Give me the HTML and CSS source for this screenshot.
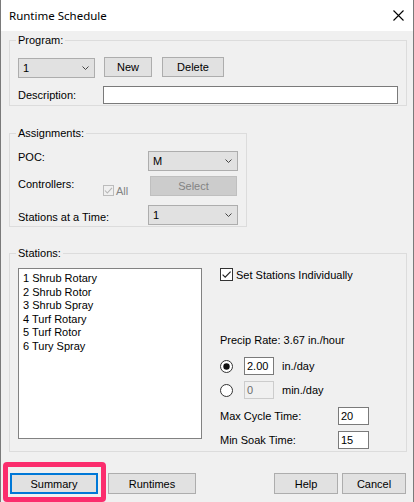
FILE: index.html
```html
<!DOCTYPE html>
<html>
<head>
<meta charset="utf-8">
<link rel="stylesheet" href="styles.css">
</head>
<body>
<div class="window">
  <div class="titlebar">
    <span class="title">Runtime Schedule</span>
    <svg class="close" width="11" height="11" viewBox="0 0 11 11"><path d="M0.5 0.5 L10.5 10.5 M10.5 0.5 L0.5 10.5" stroke="#000" stroke-width="1.1" fill="none"/></svg>
  </div>
  <div class="content">
    <fieldset class="group program">
      <legend>Program:</legend>
      <div class="row-program">
        <div class="combo combo-program"><span>1</span><svg class="chev" width="7" height="4" viewBox="0 0 7 4"><path d="M0.5 0.5 L3.5 3.5 L6.5 0.5" stroke="#444" fill="none"/></svg></div>
        <button class="btn btn-new">New</button>
        <button class="btn btn-delete">Delete</button>
      </div>
      <div class="row-desc">
        <span class="lbl-desc">Description:</span>
        <div class="textbox textbox-desc"></div>
      </div>
    </fieldset>

    <fieldset class="group assign">
      <legend>Assignments:</legend>
      <div class="row-poc">
        <span class="lbl-poc">POC:</span>
        <div class="combo combo-assign"><span>M</span><svg class="chev" width="7" height="4" viewBox="0 0 7 4"><path d="M0.5 0.5 L3.5 3.5 L6.5 0.5" stroke="#444" fill="none"/></svg></div>
      </div>
      <div class="row-ctrl">
        <span class="lbl-ctrl">Controllers:</span>
        <span class="chk-all">
          <svg class="chkbox" width="11" height="11" viewBox="0 0 11 11"><rect x="0.5" y="0.5" width="10" height="10" fill="#f0f0f0" stroke="#bcbcbc"/><path d="M2 5.5 L4.3 8 L9 2.8" stroke="#b5b5b5" stroke-width="1.1" fill="none"/></svg>
          <span class="all-text">All</span>
        </span>
        <button class="btn btn-select" disabled>Select</button>
      </div>
      <div class="row-sat">
        <span class="lbl-sat">Stations at a Time:</span>
        <div class="combo combo-assign"><span>1</span><svg class="chev" width="7" height="4" viewBox="0 0 7 4"><path d="M0.5 0.5 L3.5 3.5 L6.5 0.5" stroke="#444" fill="none"/></svg></div>
      </div>
    </fieldset>

    <fieldset class="group stations">
      <legend>Stations:</legend>
      <div class="stations-body">
        <ul class="listbox">
          <li>1 Shrub Rotary</li>
          <li>2 Shrub Rotor</li>
          <li>3 Shrub Spray</li>
          <li>4 Turf Rotary</li>
          <li>5 Turf Rotor</li>
          <li>6 Tury Spray</li>
        </ul>
        <div class="right">
          <div class="chk-row">
            <svg width="13" height="13" viewBox="0 0 13 13"><rect x="0.5" y="0.5" width="12" height="12" fill="#fff" stroke="#333"/><path d="M2.6 6.6 L5.2 9.2 L10.6 3.6" stroke="#222" stroke-width="1.2" fill="none"/></svg>
            <span>Set Stations Individually</span>
          </div>
          <div class="precip">Precip Rate: 3.67 in./hour</div>
          <div class="radio-row first">
            <svg width="13" height="13" viewBox="0 0 13 13"><circle cx="6.5" cy="6.5" r="6" fill="#fff" stroke="#333"/><circle cx="6.5" cy="6.5" r="3.2" fill="#111"/></svg>
            <div class="textbox textbox-small">2.00</div>
            <span class="unit">in./day</span>
          </div>
          <div class="radio-row">
            <svg width="13" height="13" viewBox="0 0 13 13"><circle cx="6.5" cy="6.5" r="6" fill="#fff" stroke="#333"/></svg>
            <div class="textbox textbox-small disabled">0</div>
            <span class="unit">min./day</span>
          </div>
          <div class="field-row max">
            <span class="field-lbl">Max Cycle Time:</span>
            <div class="textbox textbox-num">20</div>
          </div>
          <div class="field-row soak">
            <span class="field-lbl">Min Soak Time:</span>
            <div class="textbox textbox-num">15</div>
          </div>
        </div>
      </div>
    </fieldset>

    <div class="buttons">
      <span class="hl-wrap">
        <button class="btn btn-bottom btn-summary">Summary</button>
        <span class="highlight"></span>
      </span>
      <button class="btn btn-bottom btn-runtimes">Runtimes</button>
      <button class="btn btn-bottom btn-help">Help</button>
      <button class="btn btn-bottom btn-cancel">Cancel</button>
    </div>
  </div>
</div>
</body>
</html>
```
FILE: styles.css
```css
* { box-sizing: border-box; }
body {
  margin: 0;
  background: #fff;
  font-family: "Liberation Sans", Arial, sans-serif;
  font-size: 11px;
  color: #000;
}
.window {
  width: 414px;
  height: 502px;
  background: #f0f0f0;
  border-left: 1px solid #7a7a7a;
  border-right: 1px solid #7a7a7a;
  position: relative;
  overflow: hidden;
}
.titlebar {
  height: 31px;
  background: #fff;
  display: flex;
  align-items: center;
  justify-content: space-between;
  padding: 0 9px 0 8px;
}
.title {
  font-family: "Noto Sans", "Liberation Sans", sans-serif;
  font-size: 11.5px;
}
.content { padding: 3px 6px 0 8px; }

.group {
  margin: 0;
  padding: 0 8px 1px;
  border: 1px solid #dcdcdc;
  min-width: 0;
}
.group legend {
  padding: 0 2px;
  margin-left: -2px;
  line-height: 13px;
  height: 13px;
  font-size: 11px;
}
.combo {
  height: 20px;
  background: #e1e1e1;
  border: 1px solid #adadad;
  display: flex;
  align-items: center;
  justify-content: space-between;
  padding: 0 5px 0 4px;
}
.btn {
  height: 20px;
  font-family: "Liberation Sans", Arial, sans-serif;
  font-size: 11px;
  color: #000;
  background: #e1e1e1;
  border: 1px solid #adadad;
  padding: 0;
  margin: 0;
}
.textbox {
  height: 18px;
  background: #fff;
  border: 1px solid #7a7a7a;
  padding: 0 2px;
  line-height: 16px;
}

/* Program */
.row-program { display: flex; align-items: flex-start; margin-top: 11px; height: 20px; }
.combo-program { width: 77px; }
.btn-new { width: 48px; margin-left: 9px; margin-top: -1px; }
.btn-delete { width: 62px; margin-left: 10px; margin-top: -1px; }
.row-desc { display: flex; align-items: center; margin-top: 8px; height: 18px; }
.lbl-desc { width: 85px; }
.textbox-desc { flex: 1; }

/* Assignments */
.assign { width: 238px; margin-top: 21px; }
.row-poc { display: flex; justify-content: space-between; align-items: flex-start; margin-top: 11px; height: 20px; }
.lbl-poc { line-height: 13px; }
.combo-assign { width: 90px; }
.row-ctrl { display: flex; align-items: flex-start; margin-top: 5px; height: 20px; }
.lbl-ctrl { width: 85px; padding-top: 2px; line-height: 13px; }
.chk-all { display: flex; align-items: center; margin-top: 9px; height: 11px; line-height: 11px; }
.chkbox { display: block; }
.all-text { margin-left: 2px; color: #838383; position: relative; top: 1px; }
.btn-select {
  margin-left: auto;
  margin-right: 1px;
  width: 87px;
  background: #cccccc;
  border-color: #bfbfbf;
  color: #838383;
}
.row-sat { display: flex; justify-content: space-between; align-items: flex-start; margin-top: 9px; height: 20px; }
.lbl-sat { margin-top: 6px; line-height: 13px; }

/* Stations */
.stations { margin-top: 20px; padding-bottom: 2px; }
.stations-body { display: flex; align-items: flex-start; margin-top: 8px; }
.listbox {
  width: 184px;
  height: 171px;
  background: #fff;
  border: 1px solid #828282;
  padding: 3px 4px;
  margin: 0;
  list-style: none;
  line-height: 13.5px;
}
.right { margin-left: 18px; display: flex; flex-direction: column; }
.right svg { display: block; flex: none; }
.chk-row { display: flex; align-items: center; height: 13px; gap: 3px; }
.precip { margin-top: 53px; line-height: 13px; height: 13px; }
.radio-row { display: flex; align-items: center; height: 18px; margin-top: 6px; }
.radio-row.first { margin-top: 10px; }
.textbox-small { width: 30px; margin-left: 11px; }
.textbox.disabled { background: #f0f0f0; border-color: #cccccc; color: #6d6d6d; }
.unit { margin-left: 8px; }
.field-row { display: flex; align-items: center; height: 18px; }
.field-row.max { margin-top: 8px; }
.field-row.soak { margin-top: 6px; }
.field-lbl { width: 118px; }
.textbox-num { width: 31px; }

/* Bottom buttons */
.buttons { display: flex; margin: 21px 0 0 1px; }
.btn-bottom { height: 21px; }
.hl-wrap { position: relative; display: flex; }
.btn-summary { width: 88px; border: 2px solid #0078d7; }
.highlight {
  position: absolute;
  top: -11px;
  left: -7px;
  right: -8px;
  bottom: -8px;
  border: 5px solid #fb2d6d;
  border-radius: 4px;
  pointer-events: none;
}
.btn-runtimes { width: 88px; margin-left: 10px; }
.btn-help { width: 64px; margin-left: 78px; }
.btn-cancel { width: 64px; margin-left: 4px; }
```
